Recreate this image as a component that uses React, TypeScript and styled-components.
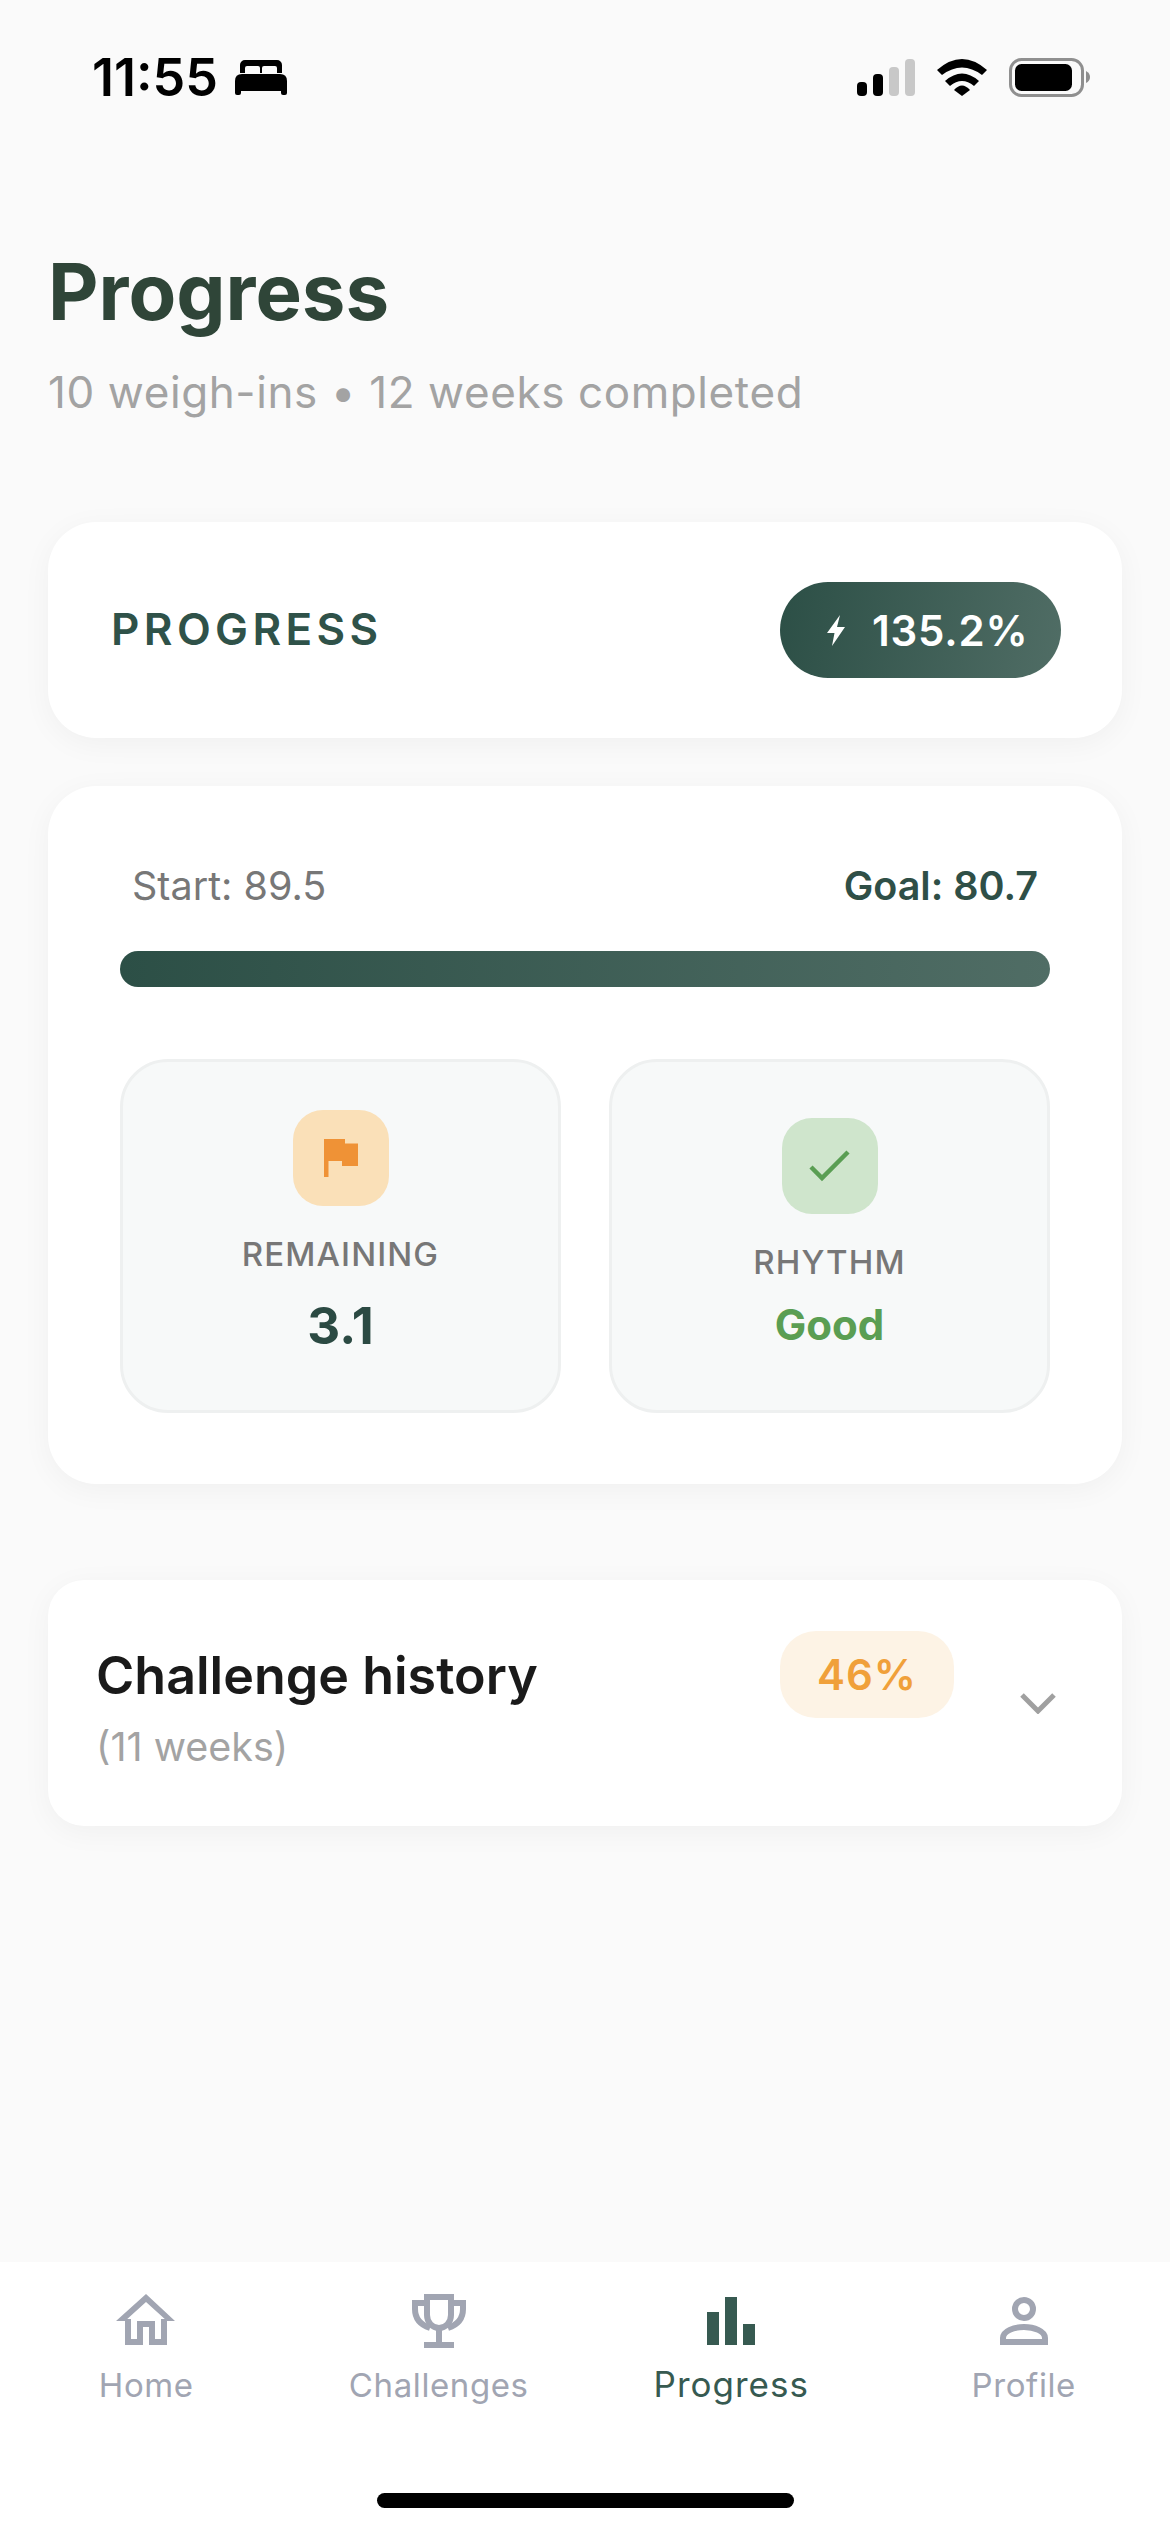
import React from "react";
import styled, { createGlobalStyle } from "styled-components";

const Global = createGlobalStyle`
  html, body { margin: 0; padding: 0; background: #fafafa; }
  * { box-sizing: border-box; }
  body { font-family: Inter, "Liberation Sans", sans-serif; }
`;

const Screen = styled.div`
  width: 1170px;
  height: 2532px;
  display: flex;
  flex-direction: column;
  background: #fafafa;
  overflow: hidden;
`;

const StatusBar = styled.header`
  display: flex;
  justify-content: space-between;
  align-items: center;
  padding: 58px 79px 0 92px;
  height: 97px;
`;
const StatusLeft = styled.div`
  display: flex;
  align-items: center;
  gap: 17px;
`;
const Time = styled.span`
  font-size: 52px;
  line-height: 39px;
  font-weight: 600;
  color: #000;
`;
const StatusRight = styled.div`
  display: flex;
  align-items: center;
  gap: 22px;
`;

const Main = styled.main`
  flex: 1;
  padding: 150px 48px 0;
  display: flex;
  flex-direction: column;
`;
const Title = styled.h1`
  margin: 0;
  font-size: 78px;
  line-height: 90px;
  font-weight: 700;
  color: #2f4538;
`;
const Subtitle = styled.p`
  margin: 29px 0 104px;
  font-size: 44px;
  line-height: 52px;
  font-weight: 400;
  letter-spacing: 0.6px;
  color: #a3a3a3;
`;

const Card = styled.section`
  background: #fff;
  border-radius: 48px;
  box-shadow: 0 6px 30px rgba(0, 0, 0, 0.045);
`;
const HeaderCard = styled(Card)`
  height: 216px;
  padding: 0 61px 0 63px;
  display: flex;
  align-items: center;
  justify-content: space-between;
`;
const SectionLabel = styled.span`
  font-size: 44px;
  line-height: 52px;
  margin-top: -3px;
  font-weight: 600;
  letter-spacing: 4.4px;
  color: #2f5249;
`;
const PercentPill = styled.div`
  width: 281px;
  height: 96px;
  border-radius: 48px;
  padding-left: 47px;
  display: flex;
  align-items: center;
  gap: 27px;
  background: linear-gradient(100deg, #2c4f46, #506d65);
  color: #fff;
  font-size: 42px;
  font-weight: 600;
  letter-spacing: 0.8px;
`;

const ProgressCard = styled(Card)`
  margin-top: 48px;
  padding: 78px 72px 71px;
`;
const RangeRow = styled.div`
  display: flex;
  justify-content: space-between;
  padding: 0 12px;
  font-size: 39.5px;
  line-height: 44px;
`;
const RangeStart = styled.span`
  color: #777;
`;
const RangeGoal = styled.span`
  color: #2f4f47;
  font-weight: 600;
`;
const Bar = styled.div`
  margin-top: 43px;
  height: 36px;
  border-radius: 18px;
  background: linear-gradient(90deg, #2c4f46, #506d65);
`;
const StatGrid = styled.div`
  margin-top: 72px;
  display: grid;
  grid-template-columns: 1fr 1fr;
  gap: 48px;
`;
const StatBox = styled.div`
  height: 354px;
  border: 3px solid #eef0f0;
  border-radius: 48px;
  background: #f7f9f9;
  display: flex;
  flex-direction: column;
  align-items: center;
  justify-content: center;
`;
const StatIcon = styled.div<{ $bg: string }>`
  width: 96px;
  height: 96px;
  border-radius: 30px;
  background: ${(p) => p.$bg};
  display: flex;
  align-items: center;
  justify-content: center;
`;
const StatLabel = styled.div`
  margin-top: 28px;
  font-size: 33px;
  line-height: 40px;
  font-weight: 500;
  letter-spacing: 1.1px;
  color: #777;
`;
const StatValue = styled.div<{ $size: number; $leading: number; $color: string }>`
  margin-top: 14px;
  font-size: ${(p) => p.$size}px;
  line-height: ${(p) => p.$leading}px;
  font-weight: 700;
  color: ${(p) => p.$color};
`;

const HistoryCard = styled(Card)`
  margin-top: 96px;
  height: 246px;
  border-radius: 36px;
  padding: 51px 66px 0 48px;
  display: flex;
  align-items: flex-start;
`;
const HistoryText = styled.div`
  flex: 1;
  padding-top: 14px;
`;
const HistoryTitle = styled.div`
  font-size: 52px;
  line-height: 62px;
  font-weight: 600;
  color: #1a1a1a;
`;
const HistorySub = styled.div`
  margin-top: 17px;
  font-size: 39.5px;
  line-height: 46px;
  color: #a3a3a3;
`;
const ScorePill = styled.div`
  width: 174px;
  height: 87px;
  border-radius: 36px;
  background: #fdf3e5;
  color: #f0a03a;
  font-size: 42px;
  font-weight: 600;
  letter-spacing: 1px;
  display: flex;
  align-items: center;
  justify-content: center;
`;
const Chevron = styled.svg`
  margin: 62px 0 0 66px;
`;

const Nav = styled.nav`
  height: 270px;
  background: #fff;
  display: flex;
  flex-direction: column;
  align-items: center;
`;
const NavGrid = styled.div`
  width: 100%;
  padding-top: 32px;
  display: grid;
  grid-template-columns: repeat(4, 1fr);
`;
const NavItem = styled.div<{ $active?: boolean }>`
  display: flex;
  flex-direction: column;
  align-items: center;
  gap: ${(p) => (p.$active ? 16 : 17)}px;
  color: ${(p) => (p.$active ? "#375a51" : "#a1a5b2")};
  font-size: ${(p) => (p.$active ? 35 : 33)}px;
  line-height: 40px;
  letter-spacing: ${(p) => (p.$active ? 1 : 0.6)}px;
`;
const HomeIndicator = styled.div`
  margin-top: auto;
  margin-bottom: 24px;
  width: 417px;
  height: 15px;
  border-radius: 8px;
  background: #000;
`;

const BedIcon = () => (
  <svg width="52" height="35" viewBox="0 0 52 35">
    <path
      fillRule="evenodd"
      d="M5 13V5a5 5 0 0 1 5-5h32a5 5 0 0 1 5 5v8zM10 13h15V8a2 2 0 0 0-2-2H12a2 2 0 0 0-2 2zM27 13h15V8a2 2 0 0 0-2-2H29a2 2 0 0 0-2 2z"
    />
    <path d="M0 21q0-7 7-7h38q7 0 7 7v12q0 2-2 2h-2q-2 0-2-2v-2H6v2q0 2-2 2H2q-2 0-2-2z" />
  </svg>
);
const SignalIcon = () => (
  <svg width="58" height="37" viewBox="0 0 58 37">
    <rect x="0" y="23" width="10" height="14" rx="4" />
    <rect x="16" y="15" width="10" height="22" rx="4" />
    <rect x="32" y="8" width="10" height="29" rx="4" fill="#c8c8c8" />
    <rect x="48" y="0" width="10" height="37" rx="4" fill="#c8c8c8" />
  </svg>
);
const WifiIcon = () => (
  <svg width="50" height="37" viewBox="0 0 50 37">
    <path d="M0 11Q25-11 50 11L45 16Q25 1 5 16z" />
    <path d="M8 22Q25 7 42 22L37 27Q25 17 13 27z" />
    <path d="M17 31Q25 22 33 31L25 37z" />
  </svg>
);
const BatteryIcon = () => (
  <svg width="82" height="39" viewBox="0 0 82 39">
    <rect x="1.5" y="1.5" width="72" height="36" rx="11" fill="none" stroke="#8f8f8f" strokeWidth="3" />
    <rect x="6" y="6" width="57" height="27" rx="6.5" />
    <path d="M77 13q4 2 4 6t-4 6z" fill="#8f8f8f" />
  </svg>
);
const BoltIcon = () => (
  <svg width="18" height="31" viewBox="0 0 18 31" fill="#fff">
    <path d="M13 0L0 18h7.500L5 31 18 12h-8z" />
  </svg>
);
const FlagIcon = () => (
  <svg width="34" height="38" viewBox="0 0 34 38" fill="#ef9236">
    <path d="M0 0H21V4.500H34V27H18V22H4.500V38H0z" />
  </svg>
);
const CheckIcon = () => (
  <svg width="42" height="32" viewBox="0 0 42 32" fill="none" stroke="#5a9e53" strokeWidth="4.500">
    <path d="M2 17L13 28 39 2" />
  </svg>
);
const HomeGlyph = () => (
  <svg width="60" height="54" viewBox="0 0 60 54">
    <path d="M0 27L30 0 59 27H51L30 8 9 27z" fill="currentColor" />
    <path d="M12 25V48H24V30H36V48H48V25" fill="none" stroke="currentColor" strokeWidth="6" />
  </svg>
);
const TrophyGlyph = () => (
  <svg width="60" height="54" viewBox="-3 0 60 54" fill="none" stroke="currentColor" strokeWidth="6">
    <path d="M12 3H42" />
    <path d="M15 3V21A12 13 0 0 0 39 21V3" />
    <path d="M15 9H3V15C3 25 9 31 18 34" />
    <path d="M39 9H51V15C51 25 45 31 36 34" />
    <path d="M27 34V48" />
    <path d="M12 51H42" />
  </svg>
);
const BarsGlyph = () => (
  <svg width="60" height="54" viewBox="-6 -3 60 54" fill="currentColor">
    <rect x="0" y="15" width="12" height="33" />
    <rect x="18" y="0" width="12" height="48" />
    <rect x="36" y="27" width="12" height="21" />
  </svg>
);
const ProfileGlyph = () => (
  <svg width="60" height="54" viewBox="-6 -3 60 54" fill="none" stroke="currentColor" strokeWidth="6">
    <circle cx="24" cy="12" r="9" />
    <path d="M3 45V41C3 34 14 30 24 30S45 34 45 41V45z" />
  </svg>
);

export default function App() {
  return (
    <Screen>
      <Global />
      <StatusBar>
        <StatusLeft>
          <Time>11:55</Time>
          <BedIcon />
        </StatusLeft>
        <StatusRight>
          <SignalIcon />
          <WifiIcon />
          <BatteryIcon />
        </StatusRight>
      </StatusBar>
      <Main>
        <Title>Progress</Title>
        <Subtitle>10 weigh-ins • 12 weeks completed</Subtitle>
        <HeaderCard>
          <SectionLabel>PROGRESS</SectionLabel>
          <PercentPill>
            <BoltIcon />
            135.2%
          </PercentPill>
        </HeaderCard>
        <ProgressCard>
          <RangeRow>
            <RangeStart>Start: 89.5</RangeStart>
            <RangeGoal>Goal: 80.7</RangeGoal>
          </RangeRow>
          <Bar />
          <StatGrid>
            <StatBox>
              <StatIcon $bg="#fae0b8">
                <FlagIcon />
              </StatIcon>
              <StatLabel>REMAINING</StatLabel>
              <StatValue $size={51} $leading={75} $color="#2b4a43">3.1</StatValue>
            </StatBox>
            <StatBox>
              <StatIcon $bg="#cfe5cc">
                <CheckIcon />
              </StatIcon>
              <StatLabel>RHYTHM</StatLabel>
              <StatValue $size={42} $leading={58} $color="#5a9e53">Good</StatValue>
            </StatBox>
          </StatGrid>
        </ProgressCard>
        <HistoryCard>
          <HistoryText>
            <HistoryTitle>Challenge history</HistoryTitle>
            <HistorySub>(11 weeks)</HistorySub>
          </HistoryText>
          <ScorePill>46%</ScorePill>
          <Chevron width="36" height="21" viewBox="0 0 36 21" fill="none" stroke="#a0a0a0" strokeWidth="5">
            <path d="M2 2L18 18 34 2" />
          </Chevron>
        </HistoryCard>
      </Main>
      <Nav>
        <NavGrid>
          <NavItem>
            <HomeGlyph />
            Home
          </NavItem>
          <NavItem>
            <TrophyGlyph />
            Challenges
          </NavItem>
          <NavItem $active>
            <BarsGlyph />
            Progress
          </NavItem>
          <NavItem>
            <ProfileGlyph />
            Profile
          </NavItem>
        </NavGrid>
        <HomeIndicator />
      </Nav>
    </Screen>
  );
}
